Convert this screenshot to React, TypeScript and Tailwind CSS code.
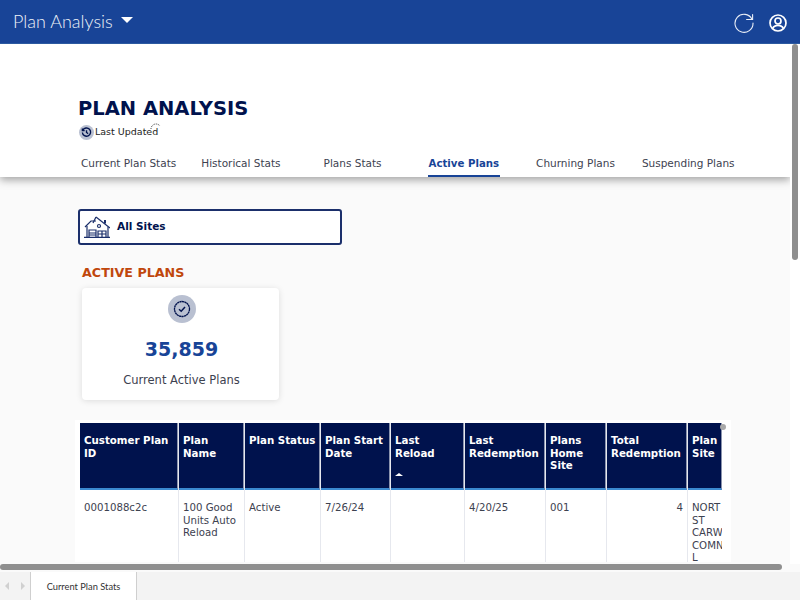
const font = "font-['DejaVu_Sans',sans-serif]"

const tabs = [
  { label: "Current Plan Stats", margin: "ml-0" },
  { label: "Historical Stats", margin: "ml-[25px]" },
  { label: "Plans Stats", margin: "ml-[43px]" },
  { label: "Active Plans", margin: "ml-[46px]" },
  { label: "Churning Plans", margin: "ml-[36px]" },
  { label: "Suspending Plans", margin: "ml-[27px]" },
]

const columns = [
  { title: "Customer Plan ID", width: "w-[99px]", value: "0001088c2c" },
  { title: "Plan Name", width: "w-[66px]", value: "100 Good Units Auto Reload" },
  { title: "Plan Status", width: "w-[76px]", value: "Active" },
  { title: "Plan Start Date", width: "w-[70px]", value: "7/26/24" },
  { title: "Last Reload", width: "w-[74px]", value: "", sort: true },
  { title: "Last Redemption", width: "w-[81px]", value: "4/20/25" },
  { title: "Plans Home Site", width: "w-[61px]", value: "001" },
  { title: "Total Redemption", width: "w-[81px]", value: "4", right: true },
  { title: "Plan Site", width: "w-[34px]", value: "NORT ST CARW COMN L", clip: true },
]

function RefreshIcon() {
  return (
    <svg width="20" height="20" viewBox="0 0 20 20" fill="none" stroke="#e8edf6" strokeWidth="1.1" strokeLinecap="round">
      <path d="M18 6.200A9 9 0 1 0 19 10" />
      <path d="M18.600 1.500v5h-6" />
    </svg>
  )
}

function UserIcon() {
  return (
    <svg width="18" height="18" viewBox="0 0 18 18" fill="none" stroke="#fff" strokeWidth="1.700">
      <circle cx="9" cy="9" r="8" />
      <circle cx="9" cy="7" r="3" />
      <path d="M3.600 14.600c1-2.400 3-3.200 5.400-3.200s4.400.8 5.400 3.200" />
    </svg>
  )
}

function HistoryBadge() {
  return (
    <span className="flex h-[15px] w-[15px] shrink-0 items-center justify-center rounded-full bg-[#b9c0d1]">
      <svg width="11" height="11" viewBox="0 0 12 12" fill="none" stroke="#00124d" strokeWidth="1.500">
        <path d="M2 3.500A4.500 4.500 0 1 1 1.500 6" />
        <path d="M1.500 1.500v2.500h2.500" />
        <path d="M6 3.500V6l1.800 1.200" />
      </svg>
    </span>
  )
}

function SitesIcon() {
  return (
    <svg width="26" height="22" viewBox="0 0 26 22" fill="none" stroke="#1b2f6b" strokeWidth="1.200" className="shrink-0">
      <path d="M1 11 7 5h5" />
      <path d="M12 1l14 11" />
      <path d="M9 7 12 1" />
      <path d="M21 4V7.500" strokeWidth="2" />
      <path d="M3 10v11M24 11v10M0 21.300h26" />
      <path d="M5 21v-7h7v7M5 17h7M5 19h7" />
      <path d="M14 21v-6h8v6M14 18h8M18 15v6" />
      <circle cx="15" cy="10" r="1.500" />
    </svg>
  )
}

function BadgeCheckIcon() {
  return (
    <span className="flex h-7 w-7 items-center justify-center rounded-full bg-[#b9c0d1]">
      <svg width="18" height="18" viewBox="0 0 18 18" fill="none" stroke="#00124d" strokeWidth="1.300">
        <circle cx="9" cy="9" r="7.500" strokeDasharray="2.200 0.300" />
        <path d="m6 9.300 2.200 2L12 7" strokeWidth="1.500" />
      </svg>
    </span>
  )
}

function LoadingDots() {
  return (
    <svg width="12" height="8" viewBox="0 0 12 8" fill="none" stroke="#333" strokeWidth="1" strokeDasharray="1 1" className="absolute left-[72px] top-[-3px]">
      <path d="M1 7A5 5 0 0 1 10 4" />
    </svg>
  )
}

export default function App() {
  return (
    <div className={`flex h-[600px] w-[800px] flex-col overflow-hidden bg-[#fafafa] ${font}`}>
      <header className="flex h-11 shrink-0 items-center justify-between border-b border-[#2c5aa0] bg-[#184497] pl-[13px] pr-[13px]">
        <div className="flex items-center gap-[8px]">
          <span className="font-['Lato',sans-serif] text-[18px] font-light text-[#eef2f8]">Plan Analysis</span>
          <span className="mb-1 h-0 w-0 border-x-[6px] border-t-[6px] border-x-transparent border-t-white" />
        </div>
        <div className="mt-[3px] flex items-center gap-[15px]">
          <RefreshIcon />
          <UserIcon />
        </div>
      </header>

      <div className="relative flex min-h-0 flex-1">
        <div className="min-w-0 flex-1 overflow-hidden">
          <section className="h-[133px] bg-white pl-[78px] pr-[50px] pt-[53px] shadow-[0_3px_8px_rgba(0,0,0,0.35)]">
            <h1 className="text-[19.5px] font-bold leading-[24px] text-[#00124d]">PLAN ANALYSIS</h1>
            <div className="relative mt-[4px] flex h-[15px] items-center gap-[1px] pl-[1px] text-[9.500px] text-[#222]">
              <HistoryBadge />
              Last Updated
              <LoadingDots />
            </div>
            <nav className="mt-[16px] flex items-start pl-[3px]">
              {tabs.map((tab) =>
                tab.label === "Active Plans" ? (
                  <span key={tab.label} className={`${tab.margin} border-b-2 border-[#184497] px-[1px] pb-[4px] text-[10.200px] font-bold text-[#184497]`}>
                    {tab.label}
                  </span>
                ) : (
                  <span key={tab.label} className={`${tab.margin} pb-[6px] text-[10.500px] text-[#3d4250]`}>
                    {tab.label}
                  </span>
                ),
              )}
            </nav>
          </section>

          <main className="pl-[78px] pt-8">
            <div className="flex h-9 w-[264px] items-center gap-[7px] rounded-[3px] border-2 border-[#1b2f6b] bg-white pl-[4px] text-[10.500px] font-bold text-[#00124d]">
              <SitesIcon />
              All Sites
            </div>
            <h2 className="ml-1 mt-[20px] text-[12.700px] font-bold leading-[15px] text-[#c0470c]">ACTIVE PLANS</h2>
            <div className="ml-1 mt-[8px] flex h-[112px] w-[197px] flex-col items-center rounded-[4px] bg-white pl-[2px] pt-[7px] shadow-[0_1px_6px_rgba(0,0,0,0.12)]">
              <BadgeCheckIcon />
              <span className="mt-[14px] text-[19px] font-bold leading-[24px] text-[#184497]">35,859</span>
              <span className="mt-[12px] text-[11.500px] leading-[14px] text-[#3d4250]">Current Active Plans</span>
            </div>

            <div className="-ml-[3px] mt-[20px] h-[142px] w-[656px] overflow-hidden bg-white pl-[5px] pt-[3px]">
              <div className="flex w-[642px]">
                {columns.map((col) => (
                  <div key={col.title} className={`${col.width} shrink-0 border-r border-[#e6e8ee] last:border-r-0`}>
                    <div className="flex h-[67px] flex-col border-b-2 border-r border-b-[#3b8ad0] border-r-[#8a93ad] bg-[#00124d] pl-[4px] pt-[11px] text-[10.250px] font-bold leading-[12.500px] text-white">
                      <span className={col.sort ? "block w-[50px]" : ""}>{col.title}</span>
                      {col.sort && <span className="mt-[14px] h-0 w-0 border-x-[4px] border-b-[3px] border-x-transparent border-b-white" />}
                    </div>
                    <div
                      className={`h-[76px] pl-[4px] pt-[12px] text-[10.200px] leading-[12.500px] text-[#3d4250] ${col.right ? "pr-[4px] text-right" : ""} ${col.clip ? "overflow-hidden" : "pr-[4px]"}`}
                    >
                      {col.value}
                    </div>
                  </div>
                ))}
              </div>
            </div>
          </main>
        </div>
        <div className="w-[10px] shrink-0 bg-white pl-[2px] pr-[2px]">
          <div className="h-[216px] rounded-full bg-[#8f8f8f]" />
        </div>
        <span className="absolute left-[720px] top-[380px] h-[6px] w-[6px] rounded-full bg-[#a9a9a9]" />
      </div>

      <div className="h-[8px] shrink-0 bg-[#fafafa]">
        <div className="h-[6px] w-[782px] rounded-full bg-[#8f8f8f]" />
      </div>

      <footer className="flex h-[28px] shrink-0 bg-[#f3f3f3]">
        <div className="flex w-[30px] items-center justify-center gap-[12px]">
          <span className="h-0 w-0 border-y-[4px] border-r-[4px] border-y-transparent border-r-[#d0d0d0]" />
          <span className="h-0 w-0 border-y-[4px] border-l-[4px] border-y-transparent border-l-[#d0d0d0]" />
        </div>
        <div className="flex w-[107px] items-center justify-center border-x border-[#cfcfcf] bg-white pt-[2px] font-['Lato',sans-serif] text-[9.300px] text-[#333]">
          Current Plan Stats
        </div>
      </footer>
    </div>
  )
}
